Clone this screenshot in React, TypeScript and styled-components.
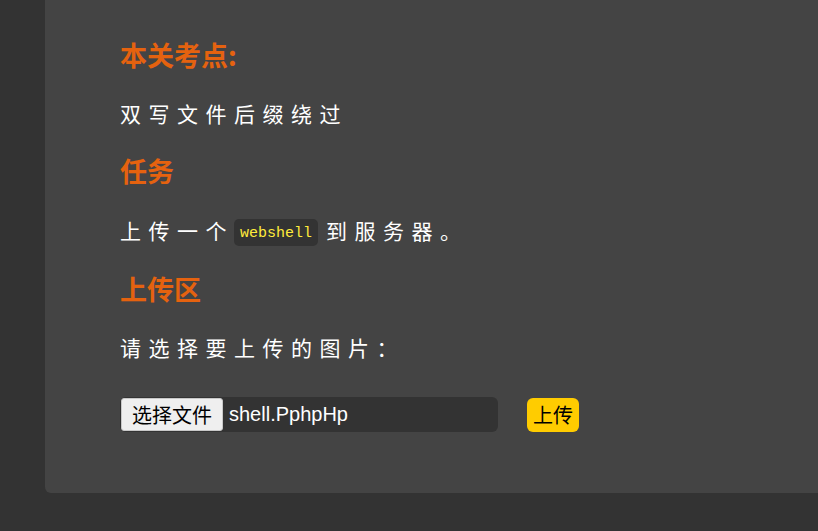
import React, { ReactElement } from 'react';
import styled, { createGlobalStyle } from 'styled-components';

const GlobalStyle = createGlobalStyle`
  html, body {
    margin: 0;
    padding: 0;
    background-color: #333333;
    overflow: hidden;
  }

  body {
    font-family: "Noto Sans CJK SC", "Noto Sans", sans-serif;
    color: #ffffff;
  }
`;

function App(): ReactElement {
  return (
    <StyledPage>
      <GlobalStyle />
      <Panel>
        <Heading>本关考点:</Heading>
        <Paragraph>双写文件后缀绕过</Paragraph>
        <Heading>任务</Heading>
        <Paragraph>
          上传一个<Code>webshell</Code>到服务器。
        </Paragraph>
        <Heading>上传区</Heading>
        <Paragraph>请选择要上传的图片：</Paragraph>
        <UploadRow>
          <FilePicker>
            <PickButton>选择文件</PickButton>
            <FileName>shell.PphpHp</FileName>
          </FilePicker>
          <SubmitButton type='button'>上传</SubmitButton>
        </UploadRow>
      </Panel>
    </StyledPage>
  );
}

export default App;

const StyledPage = styled.div`
  padding: 0 0 39px 45px;
`;

const Panel = styled.div`
  display: flex;
  flex-direction: column;
  align-items: flex-start;
  gap: 25px;
  margin-right: -20px;
  padding: 37px 75px 61px;
  background-color: #444444;
  border-radius: 0 0 0 6px;
`;

const Heading = styled.h3`
  margin: 0;
  font-size: 27px;
  line-height: 36px;
  font-weight: 700;
  color: #e5620f;
`;

const Paragraph = styled.p`
  margin: 0;
  font-size: 21px;
  line-height: 30px;
  letter-spacing: 7.5px;
  display: flex;
  align-items: center;
`;

const Code = styled.code`
  display: flex;
  align-items: center;
  height: 27px;
  margin: 5px 8px 0 0;
  padding: 3px 6px 0;
  box-sizing: border-box;
  font-family: "Liberation Mono", "DejaVu Sans Mono", monospace;
  font-size: 15px;
  font-weight: 400;
  letter-spacing: 0;
  color: #ffeb3b;
  background-color: #333333;
  border-radius: 5px;
`;

const UploadRow = styled.div`
  display: flex;
  align-items: center;
  gap: 29px;
  margin-top: 10px;
`;

const FilePicker = styled.label`
  display: flex;
  align-items: center;
  gap: 6px;
  width: 378px;
  height: 35px;
  background-color: #333333;
  border-radius: 6px;
`;

const PickButton = styled.span`
  display: flex;
  align-items: center;
  height: 33px;
  box-sizing: border-box;
  margin-left: 1px;
  padding: 0 10px;
  font-size: 20px;
  color: #000000;
  background-color: #efefef;
  border: 1px solid #c8c8c8;
  border-radius: 3px;
`;

const FileName = styled.span`
  font-family: "Liberation Sans", Arial, sans-serif;
  font-size: 20px;
  color: #ffffff;
`;

const SubmitButton = styled.button`
  height: 34px;
  padding: 0 6px;
  font-family: "Noto Sans CJK SC", sans-serif;
  font-size: 20px;
  color: #000000;
  background-color: #ffcc00;
  border: none;
  border-radius: 6px;
`;
